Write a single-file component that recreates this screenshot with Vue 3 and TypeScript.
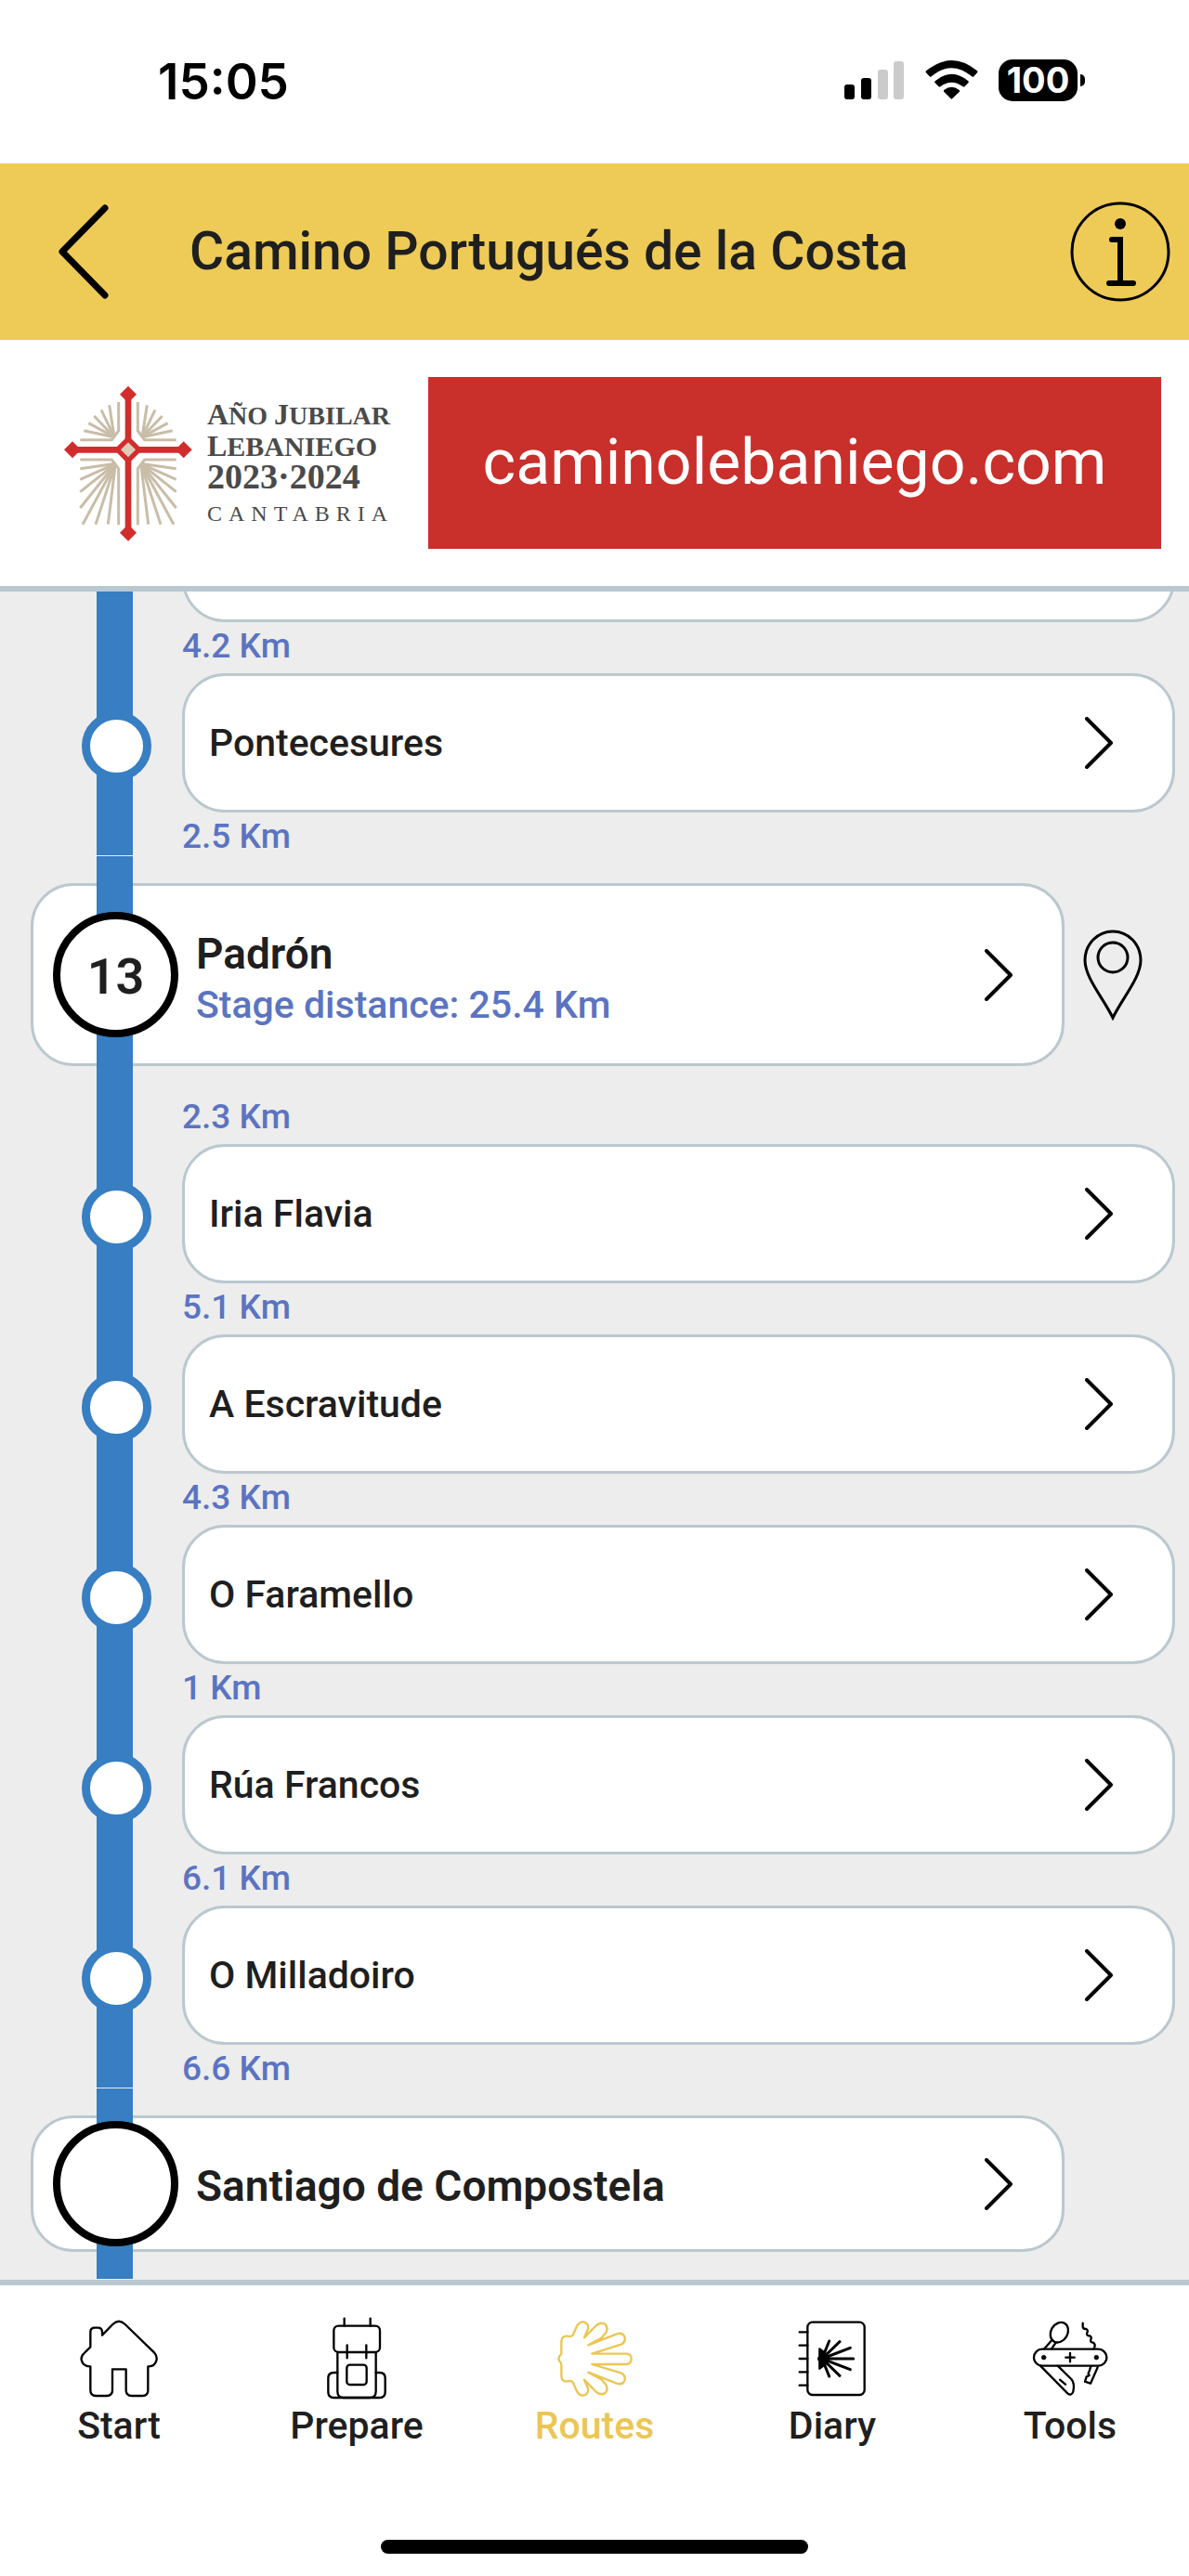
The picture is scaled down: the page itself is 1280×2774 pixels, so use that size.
<script setup lang="ts">
interface Stop {
  kind: 'stop' | 'stage'
  name: string
  stage?: string
  length?: string
  pin?: boolean
  next?: string
}

const stops: Stop[] = [
  { kind: 'stop', name: '', next: '4.2 Km' },
  { kind: 'stop', name: 'Pontecesures', next: '2.5 Km' },
  { kind: 'stage', name: 'Padrón', stage: '13', length: 'Stage distance: 25.4 Km', pin: true, next: '2.3 Km' },
  { kind: 'stop', name: 'Iria Flavia', next: '5.1 Km' },
  { kind: 'stop', name: 'A Escravitude', next: '4.3 Km' },
  { kind: 'stop', name: 'O Faramello', next: '1 Km' },
  { kind: 'stop', name: 'Rúa Francos', next: '6.1 Km' },
  { kind: 'stop', name: 'O Milladoiro', next: '6.6 Km' },
  { kind: 'stage', name: 'Santiago de Compostela' },
]

const upperRays = [[150, 217], [165, 193], [183, 170], [206, 150], [232, 135]]
const lowerRays = [[138, 340], [138, 375], [138, 415], [138, 467], [146, 520], [188, 520], [228, 520]]
const shellRays = [[998, 153], [1032, 155], [1066, 175], [1076, 210], [1066, 245], [1032, 265], [998, 267]]
</script>

<template>
  <div class="app">
    <div class="status">
      <span class="time">15:05</span>
      <div class="indicators">
        <svg class="signal" viewBox="0 0 65 42" aria-hidden="true">
          <rect x="0" y="26" width="11" height="16" rx="3" />
          <rect x="18" y="19" width="11" height="23" rx="3" />
          <rect x="36" y="10" width="11" height="32" rx="3" fill="#cbcbcb" />
          <rect x="53" y="1" width="11" height="41" rx="3" fill="#cbcbcb" />
        </svg>
        <svg class="wifi" viewBox="0 0 171 126" aria-hidden="true">
          <path d="M3 34Q0 37 3 40L14 52Q17 55 20 52Q85 -3 151 52Q154 55 157 52L168 40Q171 37 168 34Q86 -34 3 34Z" />
          <path d="M32 67Q29 70 32 73L43 84Q46 87 50 84Q85 58 121 84Q125 87 128 84L139 73Q142 70 139 67Q86 22 32 67Z" />
          <path d="M61 96Q58 99 61 102L82 123Q85 126 88 123L110 102Q113 99 110 96Q85 77 61 96Z" />
        </svg>
        <span class="battery">100</span>
      </div>
    </div>

    <header class="header">
      <button class="back" aria-label="Back">
        <svg viewBox="0 0 56 102"><path d="M51 4L5 51L51 98" /></svg>
      </button>
      <h1>Camino Portugués de la Costa</h1>
      <button class="info" aria-label="Information">
        <svg viewBox="0 0 108 108">
          <circle cx="54" cy="54" r="52" stroke-width="3" />
          <circle cx="54" cy="24" r="6" fill="#000" stroke="none" />
          <path d="M45 41H54V88M42 88H68" stroke-width="6" stroke-linecap="round" />
        </svg>
      </button>
    </header>

    <a class="banner" href="#">
      <svg class="cross" viewBox="80 65 426 516" aria-hidden="true">
        <g stroke="#c9bda8" stroke-width="9" fill="none">
          <g v-for="side in [1, -1]" :key="side" :transform="side === 1 ? undefined : 'translate(586 0) scale(-1 1)'">
            <path d="M262 125V218L240 247H138" />
            <path d="M262 522V340L240 311H138" />
            <path v-for="([x, y], i) in upperRays" :key="'u' + i" :d="`M248 238L${x} ${y}`" />
            <path v-for="([x, y], i) in lowerRays" :key="'l' + i" :d="`M252 324L${x} ${y}`" />
          </g>
        </g>
        <path d="M293 216L356 279L293 342L230 279Z" fill="#fff" />
        <g fill="#d22d2d">
          <path d="M283 100H303V547H283Z" />
          <path d="M113 269H472V289H113Z" />
          <path d="M293 73L320 100L293 127L266 100Z" />
          <path d="M293 520L320 547L293 574L266 547Z" />
          <path d="M113 252L140 279L113 306L86 279Z" />
          <path d="M472 252L499 279L472 306L445 279Z" />
          <path d="M293 233L339 279L293 325L247 279Z" />
        </g>
        <path d="M293 255L317 279L293 303L269 279Z" fill="#dccdb8" />
      </svg>
      <span class="jubilee">
        <span class="line"><b>A</b>ÑO <b>J</b>UBILAR</span>
        <span class="line place"><b>L</b>EBANIEGO</span>
        <span class="line years">2023·2024</span>
        <span class="region">CANTABRIA</span>
      </span>
      <span class="site">caminolebaniego.com</span>
    </a>

    <main class="route">
      <ol>
        <li v-for="(s, i) in stops" :key="i" :class="s.kind">
          <div class="row">
            <span class="marker">{{ s.stage }}</span>
            <button class="card" :aria-label="s.name || 'Previous stop'">
              <span class="text">
                <span class="name">{{ s.name }}</span>
                <span v-if="s.length" class="length">{{ s.length }}</span>
              </span>
              <svg class="chevron" viewBox="0 0 30 56" aria-hidden="true"><path d="M2 2L28 28L2 54" /></svg>
            </button>
            <span v-if="s.kind === 'stage'" class="slot">
              <button v-if="s.pin" class="pin" aria-label="Show on map">
                <svg viewBox="0 0 64 98">
                  <path d="M32 95C22 74 2 52 2 33A30 31 0 0 1 62 33C62 52 42 74 32 95Z" />
                  <circle cx="32" cy="30" r="16" />
                </svg>
              </button>
            </span>
          </div>
          <p v-if="s.next" class="distance">{{ s.next }}</p>
        </li>
      </ol>
    </main>

    <nav class="tabs">
      <a href="#">
        <svg viewBox="66 72 276 276" aria-hidden="true">
          <path d="M112 172V124Q112 110 126 110H136Q150 110 150 124V134L184 99Q204 80 224 99L318 190Q329 203 325 216Q320 236 298 235V312Q298 330 280 330H246Q227 330 227 312V244H183V312Q183 330 164 330H130Q112 330 112 312V235Q88 236 83 214Q81 202 92 192Z" />
        </svg>
        Start
      </a>
      <a href="#">
        <svg viewBox="834 72 276 276" aria-hidden="true">
          <rect x="898" y="104" width="149" height="85" rx="15" />
          <path d="M932 80V104M1016 80V104M941 166V208M1003 166V208" />
          <path d="M910 190V316Q910 336 930 336H1014Q1034 336 1034 316V190" />
          <rect x="940" y="230" width="64" height="64" rx="10" />
          <path d="M910 255H898Q880 255 880 273V318Q880 336 898 336H1046Q1064 336 1064 318V273Q1064 255 1046 255H1034" />
        </svg>
        Prepare
      </a>
      <a href="#" class="active" aria-current="page">
        <svg viewBox="102 72 276 276" aria-hidden="true">
          <path d="M133 192V155Q134 135 152 137Q165 140 170 134L184 103Q192 90 204 91Q222 95 219 114L207 142L246 102Q259 92 272 97Q286 108 277 126L262 143L220 166L312 130Q330 124 337 139Q342 155 328 163L232 194H343Q359 196 359 210Q359 226 343 228H232L328 257Q342 265 337 281Q330 296 312 290L220 254L262 277L277 294Q286 312 272 323Q259 328 246 318L207 278L219 306Q222 325 204 329Q192 330 184 317L170 286Q165 280 152 283Q134 285 133 265V228Q133 222 127 218Q122 210 127 202Q133 198 133 192Z" />
        </svg>
        Routes
      </a>
      <a href="#">
        <svg viewBox="870 72 276 276" aria-hidden="true">
          <rect x="928" y="92" width="184" height="235" rx="16" />
          <path d="M902 124H928M902 167H928M902 210H928M902 253H928M902 296H928" />
          <path v-for="([x, y], i) in shellRays" :key="i" :d="`M975 210L${x} ${y}`" stroke-width="9" />
          <path d="M967 178L985 192L998 210L985 228L967 242V218L963 210L967 202Z" fill="#000" />
        </svg>
        Diary
      </a>
      <a href="#">
        <svg viewBox="198 72 276 276" aria-hidden="true">
          <rect x="219" y="179" width="235" height="54" rx="27" />
          <circle cx="251" cy="206" r="7" fill="#000" stroke-width="2" />
          <circle cx="421" cy="206" r="7" fill="#000" stroke-width="2" />
          <path d="M322 206H350M336 192V220" />
          <ellipse cx="301" cy="125" rx="27" ry="34" transform="rotate(30 301 125)" />
          <path d="M277 150L253 178M290 158L276 178" />
          <path d="M377 95V107Q379 115 388 114Q396 118 390 128Q390 137 399 136Q408 140 402 150Q403 159 411 158Q420 164 413 178" />
          <path d="M240 233L328 322Q340 332 346 316Q352 290 340 276L296 233M303 278L321 293" />
          <path d="M403 235L398 250Q392 258 398 264L389 268L384 284L402 290L425 238" />
        </svg>
        Tools
      </a>
    </nav>
    <div class="home"><span></span></div>
  </div>
</template>

<style>
body {
  margin: 0;
}
</style>

<style scoped>
.app {
  display: flex;
  flex-direction: column;
  height: 100vh;
  overflow: hidden;
  background: #fff;
  color: #1f1f1f;
  font-family: Roboto, "Liberation Sans", sans-serif;
  font-weight: 500;
}

button {
  padding: 0;
  border: 0;
  background: none;
  color: inherit;
  font: inherit;
}

a {
  color: inherit;
  text-decoration: none;
}

svg {
  display: block;
  flex: none;
}

.status {
  flex: none;
  display: flex;
  justify-content: space-between;
  align-items: center;
  height: 176px;
  padding: 0 120px 0 170px;
  box-sizing: border-box;
  color: #000;
  font-family: Inter, sans-serif;
}

.time {
  font-size: 53px;
  font-weight: 600;
}

.indicators {
  display: flex;
  align-items: center;
  gap: 22px;
  padding-bottom: 4px;
}

.signal {
  width: 65px;
  height: 42px;
}

.wifi {
  width: 57px;
  height: 42px;
}

.battery {
  position: relative;
  width: 85px;
  border-radius: 15px;
  background: #000;
  color: #fff;
  font-size: 38px;
  font-weight: 700;
  line-height: 45px;
  text-align: center;
}

.battery::after {
  content: "";
  position: absolute;
  right: -8px;
  top: 16px;
  width: 5px;
  height: 13px;
  border-radius: 0 5px 5px 0;
  background: #000;
}

.header {
  flex: none;
  display: flex;
  align-items: center;
  height: 190px;
  padding: 0 20px 0 62px;
  background: #eecb56;
}

.header svg {
  fill: none;
  stroke: #000;
}

.back svg {
  width: 56px;
  height: 102px;
  stroke-width: 7;
  stroke-linecap: round;
  stroke-linejoin: round;
}

.info svg {
  width: 108px;
  height: 108px;
}

h1 {
  flex: 1;
  margin: 0 0 0 86px;
  font-size: 57px;
  font-weight: 500;
  line-height: 72px;
  white-space: nowrap;
}

.banner {
  flex: none;
  display: flex;
  align-items: center;
  height: 265px;
  padding: 0 30px 0 67px;
  border-bottom: 6px solid #b9c8d0;
}

.cross {
  width: 142px;
  height: 172px;
}

.jubilee {
  display: flex;
  flex-direction: column;
  width: 238px;
  margin-left: 14px;
  padding-top: 8px;
  color: #4a4a4a;
  font-family: "Liberation Serif", serif;
  font-weight: 700;
  white-space: nowrap;
}

.line {
  font-size: 28px;
  line-height: 33px;
}

.line b {
  font-size: 32px;
}

.line.place {
  font-size: 30px;
}

.line.years {
  font-size: 38px;
}

.region {
  font-size: 24px;
  font-weight: 400;
  line-height: 46px;
  letter-spacing: 7px;
}

.site {
  flex: 1;
  background: #c92f2b;
  color: #fff;
  font-size: 68px;
  font-weight: 400;
  line-height: 185px;
  text-align: center;
}

.route {
  flex: 1;
  display: flex;
  flex-direction: column;
  justify-content: flex-end;
  min-height: 0;
  padding-bottom: 1px;
  overflow: hidden;
  background: #ededed;
}

ol {
  margin: 0;
  padding: 0;
  list-style: none;
}

li {
  position: relative;
}

li::before {
  content: "";
  position: absolute;
  z-index: 1;
  top: 0;
  bottom: 0;
  left: 104px;
  width: 39px;
  background: #377ec2;
}

.row {
  position: relative;
  display: flex;
  align-items: center;
}

.marker {
  position: absolute;
  z-index: 2;
  box-sizing: border-box;
  border-radius: 50%;
  background: #fff;
}

.card {
  flex: 1;
  display: flex;
  align-items: center;
  justify-content: space-between;
  box-sizing: border-box;
  border: 3px solid #bac8cf;
  border-radius: 46px;
  background: #fff;
  text-align: left;
}

.text {
  display: flex;
  flex-direction: column;
}

.chevron {
  width: 30px;
  height: 56px;
  fill: none;
  stroke: #000;
  stroke-width: 4;
  stroke-linecap: round;
  stroke-linejoin: round;
}

.stop .row {
  padding: 0 15px 0 196px;
}

.stop .marker {
  top: 41px;
  left: 88px;
  width: 75px;
  height: 75px;
  border: 9px solid #377ec2;
}

.stop .card {
  height: 150px;
  padding: 0 64px 0 26px;
  font-size: 41px;
}

.stage {
  margin-top: 1px;
  padding: 29px 0;
}

.stage:has(.distance) {
  padding-bottom: 0;
}

.stage .row {
  padding-left: 33px;
}

.stage .marker {
  left: 57px;
  width: 135px;
  height: 135px;
  border: 8px solid #000;
  font-size: 54px;
  font-weight: 600;
  line-height: 124px;
  text-align: center;
}

.stage .card {
  min-height: 147px;
  padding: 0 53px 0 175px;
  font-size: 46px;
  font-weight: 600;
  line-height: 52px;
}

.stage .card:has(.length) {
  min-height: 197px;
}

.stage .text {
  padding-top: 4px;
}

.stage .text:has(.length) {
  padding-top: 10px;
}

.length {
  margin-top: 3px;
  color: #5b74c2;
  font-size: 41px;
  font-weight: 500;
}

.slot {
  width: 114px;
  padding-left: 20px;
}

.pin {
  display: block;
}

.pin svg {
  width: 64px;
  height: 98px;
  fill: none;
  stroke: #000;
  stroke-width: 3;
}

.distance {
  margin: 0;
  padding: 5px 0 9px 196px;
  color: #5b74c2;
  font-size: 37px;
  line-height: 41px;
}

.stage .distance {
  padding-top: 34px;
}

li:has(+ .stage) .distance {
  padding-bottom: 0;
}

.tabs {
  flex: none;
  display: flex;
  padding-top: 33px;
  border-top: 6px solid #b9c8d0;
}

.tabs a {
  flex: 1;
  display: flex;
  flex-direction: column;
  align-items: center;
  gap: 2px;
  font-size: 41px;
  line-height: 48px;
}

.tabs svg {
  width: 92px;
  height: 92px;
  fill: none;
  stroke: #000;
  stroke-width: 7;
  stroke-linecap: round;
  stroke-linejoin: round;
}

.tabs .active {
  color: #ebc654;
}

.tabs .active svg {
  stroke: #ebc654;
}

.home {
  flex: none;
  display: flex;
  justify-content: center;
  align-items: flex-end;
  height: 138px;
}

.home span {
  width: 36%;
  height: 15px;
  margin-bottom: 24px;
  border-radius: 8px;
  background: #000;
}
</style>
